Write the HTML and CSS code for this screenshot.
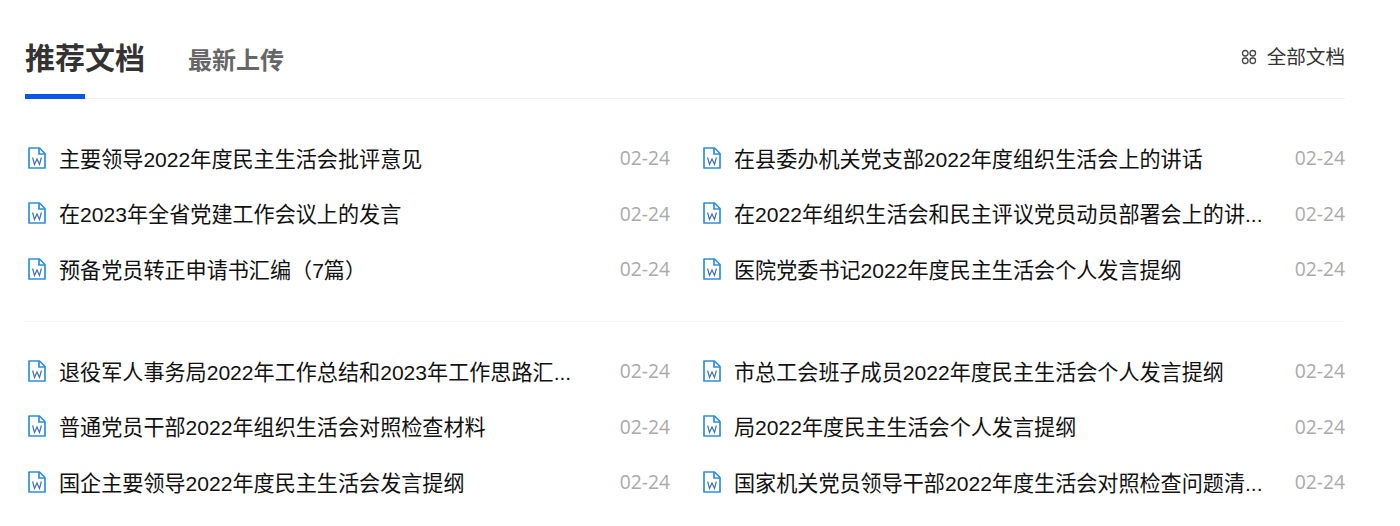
FILE: index.html
```html
<!DOCTYPE html>
<html lang="zh">
<head>
<meta charset="utf-8">
<title>推荐文档</title>
<link rel="stylesheet" href="styles.css">
</head>
<body>
<svg width="0" height="0" class="defs">
  <symbol id="doc" viewBox="0 0 18 22">
    <path d="M1 1H11.5L17 6.5V21H1Z" fill="#fff" stroke="#2f8fd8" stroke-width="1.7" stroke-linejoin="round"/>
    <path d="M11 1V7H17" fill="none" stroke="#2f8fd8" stroke-width="1.7"/>
    <path d="M4.6 10.5L6.5 17.5L9 12L11.5 17.5L13.4 10.5" fill="none" stroke="#3f6fb5" stroke-width="1.2"/>
  </symbol>
</svg>
<main class="page">
  <header class="head">
    <div class="tabs">
      <h2 class="tab-active">推荐文档</h2>
      <h3 class="tab">最新上传</h3>
    </div>
    <a class="all">
      <svg class="all-icon" viewBox="0 0 16 16"><g fill="none" stroke="#444" stroke-width="1.3"><rect x="1.5" y="1.5" width="5.5" height="5.5" rx="2.4"/><rect x="9" y="1.5" width="5.5" height="5.5" rx="2.4"/><rect x="1.5" y="9" width="5.5" height="5.5" rx="2.4"/><rect x="9" y="9" width="5.5" height="5.5" rx="2.4"/></g></svg>
      全部文档
    </a>
  </header>
  <section class="group">
    <div class="item"><svg class="doc"><use href="#doc"/></svg><span class="name">主要领导2022年度民主生活会批评意见</span><span class="date">02-24</span></div>
    <div class="item"><svg class="doc"><use href="#doc"/></svg><span class="name">在县委办机关党支部2022年度组织生活会上的讲话</span><span class="date">02-24</span></div>
    <div class="item"><svg class="doc"><use href="#doc"/></svg><span class="name">在2023年全省党建工作会议上的发言</span><span class="date">02-24</span></div>
    <div class="item"><svg class="doc"><use href="#doc"/></svg><span class="name">在2022年组织生活会和民主评议党员动员部署会上的讲...</span><span class="date">02-24</span></div>
    <div class="item"><svg class="doc"><use href="#doc"/></svg><span class="name">预备党员转正申请书汇编（7篇）</span><span class="date">02-24</span></div>
    <div class="item"><svg class="doc"><use href="#doc"/></svg><span class="name">医院党委书记2022年度民主生活会个人发言提纲</span><span class="date">02-24</span></div>
  </section>
  <section class="group second">
    <div class="item"><svg class="doc"><use href="#doc"/></svg><span class="name">退役军人事务局2022年工作总结和2023年工作思路汇...</span><span class="date">02-24</span></div>
    <div class="item"><svg class="doc"><use href="#doc"/></svg><span class="name">市总工会班子成员2022年度民主生活会个人发言提纲</span><span class="date">02-24</span></div>
    <div class="item"><svg class="doc"><use href="#doc"/></svg><span class="name">普通党员干部2022年组织生活会对照检查材料</span><span class="date">02-24</span></div>
    <div class="item"><svg class="doc"><use href="#doc"/></svg><span class="name">局2022年度民主生活会个人发言提纲</span><span class="date">02-24</span></div>
    <div class="item"><svg class="doc"><use href="#doc"/></svg><span class="name">国企主要领导2022年度民主生活会发言提纲</span><span class="date">02-24</span></div>
    <div class="item"><svg class="doc"><use href="#doc"/></svg><span class="name">国家机关党员领导干部2022年度生活会对照检查问题清...</span><span class="date">02-24</span></div>
  </section>
</main>
</body>
</html>
```
FILE: styles.css
```css
* { box-sizing: border-box; }
html, body { margin: 0; background: #fff; overflow: hidden; }
body { font-family: "Liberation Sans", "Noto Sans CJK SC", sans-serif; color: #222; }
.defs { position: absolute; }
.page { width: 1320px; margin-left: 25px; padding-top: 34px; }
.head { display: flex; justify-content: space-between; align-items: flex-start; height: 65px; border-bottom: 1px solid #f0f0f0; }
.tabs { display: flex; align-items: flex-start; gap: 43px; height: 65px; }
.tab-active { margin: 0; height: 65px; font-size: 30px; line-height: 50px; font-weight: 700; color: #333; background: linear-gradient(#0d55e8, #0d55e8) left bottom / 60px 5px no-repeat; }
.tab { margin: 0; font-size: 24px; line-height: 54px; font-weight: 700; color: #666; }
.all { display: flex; align-items: center; gap: 10px; font-size: 19.6px; line-height: 46px; color: #333; }
.all-icon { width: 16px; height: 16px; }
.group { display: grid; grid-template-columns: 645px 645px; column-gap: 30px; padding: 31px 0 24px; }
.second { border-top: 1px solid #f5f5f5; padding-top: 21.5px; }
.item { display: flex; align-items: center; height: 55.5px; }
.doc { width: 18px; height: 22px; margin: 0 13px 0 3px; flex: none; }
.name { flex: none; max-width: 530px; font-size: 21.1px; color: #111; white-space: nowrap; }
.date { margin-left: auto; font-family: "Open Sans", "Liberation Sans", sans-serif; font-size: 19.3px; color: #aaa; }
```
